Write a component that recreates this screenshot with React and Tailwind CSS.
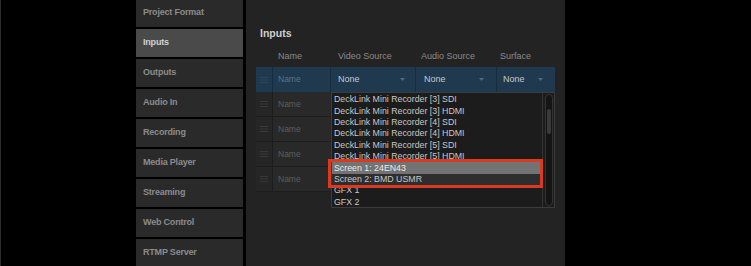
import React from 'react';

const menu = [
  'Project Format',
  'Inputs',
  'Outputs',
  'Audio In',
  'Recording',
  'Media Player',
  'Streaming',
  'Web Control',
  'RTMP Server',
];

const sources = [
  'DeckLink Mini Recorder [3] SDI',
  'DeckLink Mini Recorder [3] HDMI',
  'DeckLink Mini Recorder [4] SDI',
  'DeckLink Mini Recorder [4] HDMI',
  'DeckLink Mini Recorder [5] SDI',
  'DeckLink Mini Recorder [5] HDMI',
  'Screen 1: 24EN43',
  'Screen 2: BMD USMR',
  'GFX 1',
  'GFX 2',
];

const Handle = ({ color }) => (
  <svg width="8" height="6" viewBox="0 0 8 6">
    <rect x="0" y="0" width="8" height="1" fill={color} />
    <rect x="0" y="2.5" width="8" height="1" fill={color} />
    <rect x="0" y="5" width="8" height="1" fill={color} />
  </svg>
);

const Chevron = () => (
  <svg width="5" height="3" viewBox="0 0 5 3">
    <path d="M0 0 L2.5 3 L5 0 Z" fill="#536b7c" />
  </svg>
);

const SelectCell = ({ label, pad, chevronRight, last }) => (
  <div
    className={`flex items-center justify-between ${pad} ${chevronRight} ${
      last ? '' : 'border-r border-[#172d3d]'
    }`}
  >
    <span className="text-[9px] text-[#c4c8cc]">{label}</span>
    <Chevron />
  </div>
);

export default function App() {
  return (
    <div
      className="w-[751px] h-[266px] bg-black flex overflow-hidden"
      style={{ fontFamily: '"Liberation Sans", Arial, sans-serif' }}
    >
      {/* left black area */}
      <div className="w-[136px] shrink-0 border-l border-[#2c2c2c]" />

      {/* settings menu */}
      <div className="w-[107px] shrink-0 flex flex-col gap-[2px] mt-[-1px]">
        {menu.map((item) => {
          const active = item === 'Inputs';
          return (
            <div
              key={item}
              className={`h-[28px] shrink-0 flex items-center pl-[7px] text-[9px] font-bold tracking-[-0.2px] ${
                active ? 'bg-[#4a4a4a] text-[#d2d2d2]' : 'bg-[#2a2a2a] text-[#8c8c8c]'
              }`}
            >
              {item}
            </div>
          );
        })}
      </div>

      {/* inputs panel */}
      <div className="w-[319px] shrink-0 ml-[3px] bg-[#232323] relative">
        <div className="pt-[26px] pl-[14px] h-[40px] text-[10.5px] leading-[14px] font-bold text-[#d0d0d0]">
          Inputs
        </div>

        <div className="mx-[10px] mt-[10px]">
          {/* header */}
          <div className="grid grid-cols-[17px_58px_85px_81px_58px] h-[14px] items-center text-[9px] text-[#8a8a8a]">
            <div />
            <div className="pl-[5px]">Name</div>
            <div className="pl-[7px]">Video Source</div>
            <div className="pl-[5px]">Audio Source</div>
            <div className="pl-[3px]">Surface</div>
          </div>

          {/* selected row */}
          <div className="mt-[3px] grid grid-cols-[17px_58px_85px_81px_58px] h-[25px] bg-[#1f3a4f]">
            <div className="flex items-center justify-center border-r border-[#172d3d]">
              <Handle color="#2c4658" />
            </div>
            <div className="flex items-center pl-[5px] border-r border-[#172d3d] text-[8.5px] text-[#5c7283]">
              Name
            </div>
            <SelectCell label="None" pad="pl-[7px]" chevronRight="pr-[10px]" />
            <SelectCell label="None" pad="pl-[8px]" chevronRight="pr-[12px]" />
            <SelectCell label="None" pad="pl-[6px]" chevronRight="pr-[12px]" last />
          </div>

          {/* other rows */}
          {[0, 1, 2, 3].map((i) => (
            <div
              key={i}
              className="grid grid-cols-[17px_58px_1fr] h-[25px] bg-[#292929] border-b border-[#1d1d1d]"
            >
              <div className="flex items-center justify-center bg-[#262626] border-r border-[#1d1d1d]">
                <Handle color="#383838" />
              </div>
              <div className="flex items-center pl-[5px] text-[8.5px] text-[#5e5e5e]">Name</div>
              <div />
            </div>
          ))}
        </div>

        {/* video source dropdown */}
        <div className="absolute left-[85px] top-[92px] w-[224px] h-[116px] bg-[#1c1c1c] border border-[#3c3c3c] flex">
          <div className="w-[211px] relative border-r border-[#333333] pt-[1px]">
            {sources.map((s, i) => (
              <div
                key={s}
                className={`h-[11.4px] flex items-center pl-[2px] text-[8.8px] leading-none text-[#c8c8c8] ${
                  i === 6 ? 'bg-[#737373] text-[#ececec]' : i === 7 ? 'bg-[#2e2e2e]' : ''
                }`}
              >
                {s}
              </div>
            ))}
            <div className="absolute left-[-4px] top-[66px] w-[215px] h-[29px] border-[3px] border-[#d93a22]" />
          </div>
          <div className="flex-1 flex justify-center py-[1px]">
            <div className="w-[8px] h-full rounded-full bg-[#151515] border border-[#333333] relative">
              <div className="absolute left-[1px] right-[1px] top-[14px] h-[25px] rounded-full bg-[#3a3a3a]" />
            </div>
          </div>
        </div>
      </div>
    </div>
  );
}
